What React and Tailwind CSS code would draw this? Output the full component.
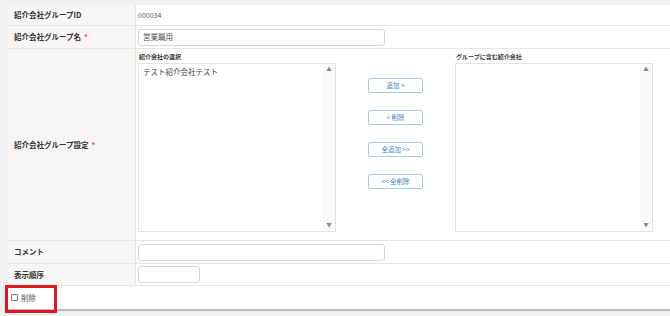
import React from 'react';

const FONT = { fontFamily: '"Noto Sans CJK JP", "Noto Sans", sans-serif' };

function Req() {
  return <span className="ml-[3px] text-[#e8534a]">*</span>;
}

function ListBox({ items }) {
  return (
    <div className="flex h-[169px] w-[198px] shrink-0 border border-[#e3e3e3] bg-white">
      <div className="flex-1 px-[4px] py-[2px] text-[7.5px] leading-[12px] text-[#444]">
        {items.map((it) => (
          <div key={it}>{it}</div>
        ))}
      </div>
      <div className="flex w-[12px] flex-col items-center justify-between bg-[#fafafa] py-[3px] text-[5.5px] leading-none text-[#8a8a8a]">
        <span>▲</span>
        <span>▼</span>
      </div>
    </div>
  );
}

function MoveButton({ children }) {
  return (
    <button className="flex h-[15px] w-[55px] items-center justify-center rounded-[2px] border border-[#a8cbe9] bg-white text-[6.5px] text-[#3d84c6]">
      {children}
    </button>
  );
}

export default function App() {
  return (
    <div className="min-h-screen bg-[#f1f1f1] pl-[7px] pt-[5px]" style={FONT}>
      <div className="relative rounded-tl-[3px] bg-white shadow-[0_2px_1px_#b8b8b8]">
        <div className="grid grid-cols-[129px_1fr] text-[7.5px] text-[#333]">
          <div className="flex h-[21px] items-center border-b border-r border-[#e6e6e6] bg-[#f7f6f4] pl-[7px] font-bold">紹介会社グループID</div>
          <div className="flex h-[21px] items-center border-b border-[#e6e6e6] pl-[2px] text-[7px] text-[#555]">000034</div>

          <div className="flex h-[23px] items-center border-b border-r border-[#e6e6e6] bg-[#f7f6f4] pl-[7px] font-bold">
            紹介会社グループ名<Req />
          </div>
          <div className="flex h-[23px] items-center border-b border-[#e6e6e6] pl-[2px]">
            <div className="flex h-[17px] w-[247px] items-center rounded-[3px] border border-[#d6d6d6] px-[4px] text-[#555]">営業職用</div>
          </div>

          <div className="flex h-[192px] items-center border-b border-r border-[#e6e6e6] bg-[#f7f6f4] pl-[7px] font-bold">
            紹介会社グループ設定<Req />
          </div>
          <div className="flex h-[192px] items-start border-b border-[#e6e6e6] pl-[2px] pt-[5px]">
            <div className="flex shrink-0 flex-col">
              <div className="mb-[3px] ml-[1px] text-[6px] font-bold leading-[6px]">紹介会社の選択</div>
              <ListBox items={['テスト紹介会社テスト']} />
            </div>
            <div className="flex w-[119px] shrink-0 flex-col items-center gap-[17px] pt-[24px]">
              <MoveButton>追加 &gt;</MoveButton>
              <MoveButton>&lt; 削除</MoveButton>
              <MoveButton>全追加 &gt;&gt;</MoveButton>
              <MoveButton>&lt;&lt; 全削除</MoveButton>
            </div>
            <div className="flex shrink-0 flex-col">
              <div className="mb-[3px] ml-[1px] text-[6px] font-bold leading-[6px]">グループに含む紹介会社</div>
              <ListBox items={[]} />
            </div>
          </div>

          <div className="flex h-[23px] items-center border-b border-r border-[#e6e6e6] bg-[#f7f6f4] pl-[7px] font-bold">コメント</div>
          <div className="flex h-[23px] items-center border-b border-[#e6e6e6] pl-[2px]">
            <div className="h-[17px] w-[247px] rounded-[3px] border border-[#d6d6d6]" />
          </div>

          <div className="flex h-[22px] items-center border-b border-r border-[#e6e6e6] bg-[#f7f6f4] pl-[7px] font-bold">表示順序</div>
          <div className="flex h-[22px] items-center border-b border-[#e6e6e6] pl-[2px]">
            <div className="h-[17px] w-[62px] rounded-[3px] border border-[#d6d6d6]" />
          </div>

          <div className="col-span-2 flex h-[23px] items-center pl-[4px] text-[#555]">
            <span className="mr-[3px] inline-block h-[7px] w-[7px] rounded-[1px] border border-[#777] bg-white" />
            削除
          </div>
        </div>
        <div className="absolute left-[-2px] top-[280px] h-[28px] w-[52px] border-[3px] border-[#e4161f]" />
      </div>
    </div>
  );
}
